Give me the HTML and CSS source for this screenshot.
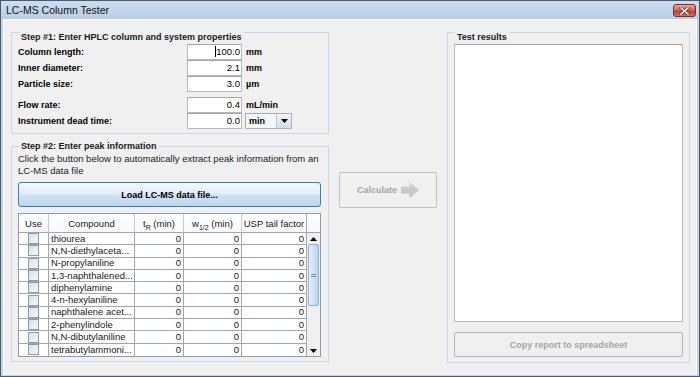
FILE: index.html
```html
<!DOCTYPE html>
<html lang="en">
<head>
<meta charset="utf-8">
<title>LC-MS Column Tester</title>
<link rel="stylesheet" href="styles.css">
</head>
<body>
<div class="window">
  <div class="titlebar">
    <span class="title">LC-MS Column Tester</span>
    <div class="close-btn">
      <svg width="11" height="8" viewBox="0 0 11 8">
        <path d="M2 1 L9 7 M9 1 L2 7" stroke="#6b2a22" stroke-width="3" stroke-linecap="square"/>
        <path d="M2 1 L9 7 M9 1 L2 7" stroke="#ffffff" stroke-width="1.6" stroke-linecap="square"/>
      </svg>
    </div>
  </div>
  <div class="content">
    <div class="left-col">
      <section class="group step1">
        <div class="group-title">Step #1: Enter HPLC column and system properties</div>
        <div class="form">
          <span class="label">Column length:</span><div class="field"><span class="caret"></span>100.0</div><span class="unit">mm</span>
          <span class="label">Inner diameter:</span><div class="field">2.1</div><span class="unit">mm</span>
          <span class="label">Particle size:</span><div class="field">3.0</div><span class="unit">µm</span>
        </div>
        <div class="form form-second">
          <span class="label">Flow rate:</span><div class="field">0.4</div><span class="unit">mL/min</span>
          <span class="label">Instrument dead time:</span><div class="field">0.0</div>
          <div class="combo"><span class="combo-text">min</span><span class="combo-arrow"><svg width="7" height="4" viewBox="0 0 7 4"><path d="M0 0 H7 L3.5 4 Z" fill="#000"/></svg></span></div>
        </div>
      </section>
      <section class="group step2">
        <div class="group-title">Step #2: Enter peak information</div>
        <p class="hint">Click the button below to automatically extract peak information from an<br>LC-MS data file</p>
        <button class="btn btn-load">Load LC-MS data file...</button>
        <div class="table-box">
          <table class="peaks">
            <colgroup>
              <col class="c-use"><col class="c-name"><col class="c-tr"><col class="c-w"><col class="c-usp">
            </colgroup>
            <thead>
              <tr><th>Use</th><th>Compound</th><th>t<sub>R</sub> (min)</th><th>w<sub>1/2</sub> (min)</th><th>USP tail factor</th></tr>
            </thead>
            <tbody>
              <tr><td><span class="check"></span></td><td class="name">thiourea</td><td>0</td><td>0</td><td>0</td></tr>
              <tr><td><span class="check"></span></td><td class="name">N,N-diethylaceta...</td><td>0</td><td>0</td><td>0</td></tr>
              <tr><td><span class="check"></span></td><td class="name">N-propylaniline</td><td>0</td><td>0</td><td>0</td></tr>
              <tr><td><span class="check"></span></td><td class="name">1,3-naphthalened...</td><td>0</td><td>0</td><td>0</td></tr>
              <tr><td><span class="check"></span></td><td class="name">diphenylamine</td><td>0</td><td>0</td><td>0</td></tr>
              <tr><td><span class="check"></span></td><td class="name">4-n-hexylaniline</td><td>0</td><td>0</td><td>0</td></tr>
              <tr><td><span class="check"></span></td><td class="name">naphthalene acet...</td><td>0</td><td>0</td><td>0</td></tr>
              <tr><td><span class="check"></span></td><td class="name">2-phenylindole</td><td>0</td><td>0</td><td>0</td></tr>
              <tr><td><span class="check"></span></td><td class="name">N,N-dibutylaniline</td><td>0</td><td>0</td><td>0</td></tr>
              <tr><td><span class="check"></span></td><td class="name">tetrabutylammoni...</td><td>0</td><td>0</td><td>0</td></tr>
            </tbody>
          </table>
          <div class="vscroll">
            <div class="corner"></div>
            <div class="track">
              <div class="sb-btn"><svg width="7" height="4" viewBox="0 0 7 4"><path d="M0 4 H7 L3.5 0 Z" fill="#000"/></svg></div>
              <div class="thumb"><span class="grip"></span></div>
              <div class="track-fill"></div>
              <div class="sb-btn"><svg width="7" height="4" viewBox="0 0 7 4"><path d="M0 0 H7 L3.5 4 Z" fill="#000"/></svg></div>
            </div>
          </div>
        </div>
      </section>
    </div>
    <div class="mid-col">
      <button class="btn btn-calc" disabled>Calculate
        <svg class="arrow" width="18" height="16" viewBox="0 0 18 16">
          <defs><linearGradient id="ag" x1="0" y1="0" x2="0" y2="1"><stop offset="0" stop-color="#d6d6d6"/><stop offset="1" stop-color="#bdbdbd"/></linearGradient></defs>
          <path d="M0 4.5 H8.5 V0 L18 8 L8.5 16 V11.5 H0 Z" fill="url(#ag)"/>
        </svg>
      </button>
    </div>
    <section class="group results">
      <div class="group-title">Test results</div>
      <div class="textarea"></div>
      <button class="btn btn-copy" disabled>Copy report to spreadsheet</button>
    </section>
  </div>
</div>
</body>
</html>
```

FILE: styles.css
```css
* { box-sizing: border-box; }
html, body { margin: 0; padding: 0; }
body {
  width: 700px;
  height: 377px;
  overflow: hidden;
  font-family: "Liberation Sans", Arial, sans-serif;
  font-size: 9.5px;
  color: #000;
}
.window {
  width: 700px;
  height: 377px;
  border: 1px solid #4d5b69;
  background: #c3d4e7;
  display: flex;
  flex-direction: column;
}
.titlebar {
  height: 18px;
  flex: none;
  display: flex;
  align-items: flex-start;
  justify-content: space-between;
  background: linear-gradient(to bottom, #cddef0, #b9cee6);
}
.title {
  font-size: 10.5px;
  line-height: 18px;
  padding-left: 5px;
  color: #111;
}
.close-btn {
  width: 23px;
  height: 13px;
  margin: 3px 3px 0 0;
  border: 1px solid #7a2f26;
  border-radius: 3px;
  background: linear-gradient(to bottom, #e8a89e 0%, #d4695b 45%, #c0402f 55%, #d2705f 100%);
  display: flex;
  align-items: center;
  justify-content: center;
}
.close-btn svg { display: block; }
.content {
  flex: 1;
  margin: 0 2px 1px 2px;
  background: #f0f0f0;
  border: 1px solid #f9fbfd;
  display: flex;
  align-items: flex-start;
  padding: 12px 6px 0 7px;
}
.left-col {
  width: 318px;
  display: flex;
  flex-direction: column;
  gap: 12px;
}
.group {
  border: 1px solid #c9d7e5;
  display: flex;
  flex-direction: column;
}
.group-title {
  align-self: flex-start;
  margin: -7px 0 0 1px;
  padding: 0 2px;
  background: #f0f0f0;
  font-weight: bold;
  font-size: 9px;
  line-height: 13px;
  height: 13px;
  color: #1a1a1a;
}
.step1 {
  height: 102px;
  padding: 5px 6px 0 6px;
}
.form {
  display: grid;
  grid-template-columns: 169px 55px 1fr;
  grid-auto-rows: 16px;
  align-items: center;
}
.form-second { margin-top: 5px; }
.label { font-weight: bold; font-size: 9px; }
.unit { font-weight: bold; font-size: 9px; padding-left: 4px; }
.field {
  height: 16px;
  background: #fff;
  border: 1px solid #b5b8bd;
  border-top-color: #a3a6ab;
  text-align: right;
  padding-right: 1px;
  line-height: 14px;
}
.caret {
  display: inline-block;
  width: 1px;
  height: 11px;
  background: #000;
  vertical-align: -2px;
}
.combo {
  margin-left: 3px;
  width: 47px;
  height: 16px;
  border: 1px solid #a9acb1;
  background: #f4f7fa;
  display: flex;
  align-items: stretch;
}
.combo-text {
  flex: 1;
  font-weight: bold;
  font-size: 9px;
  line-height: 14px;
  padding-left: 3px;
}
.combo-arrow {
  width: 15px;
  border-left: 1px solid #b9c3cf;
  background: linear-gradient(to bottom, #f1f5f9, #d4dde8);
  display: flex;
  align-items: center;
  justify-content: center;
}
.combo-arrow svg { display: block; }
.step2 {
  height: 216px;
  padding: 0 6px 4px 6px;
}
.hint {
  margin: 0;
  line-height: 12px;
  height: 24px;
  color: #1a1a1a;
}
.btn {
  font-family: "Liberation Sans", Arial, sans-serif;
  font-size: 9px;
  font-weight: bold;
  margin: 0;
  padding: 0;
}
.btn-load {
  margin-top: 5px;
  width: 303px;
  height: 25px;
  border: 1px solid #3c7fb1;
  border-radius: 3px;
  background: linear-gradient(to bottom, #f3f8fc 0%, #e3eef8 45%, #cfe2f3 55%, #bcd6ee 100%);
  color: #000;
}
.table-box {
  margin-top: 6px;
  width: 303px;
  height: 144px;
  border: 1px solid #8d9bab;
  display: flex;
  background: #fff;
}
.peaks {
  width: 288px;
  table-layout: fixed;
  border-collapse: separate;
  border-spacing: 0;
  font-size: 9.5px;
}
.c-use { width: 30px; }
.c-name { width: 86px; }
.c-tr { width: 49px; }
.c-w { width: 58px; }
.c-usp { width: 65px; }
.peaks th {
  height: 19px;
  font-weight: normal;
  text-align: center;
  border-right: 1px solid #c8ccd2;
  border-bottom: 1px solid #9ea6b0;
  background: linear-gradient(to bottom, #ffffff, #f7f8fa);
  padding: 0;
  white-space: nowrap;
  overflow: hidden;
  color: #1a1a1a;
}
.peaks th:last-child { border-right-color: #9ea6b0; }
.peaks sub {
  font-size: 7px;
  vertical-align: -3px;
  line-height: 0;
}
.peaks td {
  height: 12.3px;
  padding: 0 2px 0 2px;
  border-right: 1px solid #9ea6b0;
  border-bottom: 1px solid #9ea6b0;
  text-align: right;
  line-height: 10px;
  white-space: nowrap;
  overflow: hidden;
  color: #1a1a1a;
}
.peaks tbody tr:last-child td { border-bottom: 0; }
.peaks td:first-child { text-align: center; padding: 0; }
.peaks td.name { text-align: left; }
.check {
  display: inline-block;
  width: 11px;
  height: 11px;
  border: 1px solid #8f9aa6;
  background: linear-gradient(135deg, #d9e0e8, #f6f8fa);
  vertical-align: middle;
}
.vscroll {
  width: 13px;
  display: flex;
  flex-direction: column;
}
.corner {
  height: 19px;
  flex: none;
  border-bottom: 1px solid #9ea6b0;
  background: linear-gradient(to bottom, #ffffff, #f7f8fa);
}
.track {
  flex: 1;
  display: flex;
  flex-direction: column;
  background: #eef0f2;
}
.sb-btn {
  height: 11px;
  flex: none;
  display: flex;
  align-items: center;
  justify-content: center;
}
.sb-btn svg { display: block; }
.thumb {
  height: 62px;
  flex: none;
  margin: 0 1px;
  border: 1px solid #8fb0d6;
  border-radius: 2px;
  background: linear-gradient(to right, #e8f1fb, #cfe0f3 50%, #bcd3ee);
  display: flex;
  align-items: center;
  justify-content: center;
}
.grip {
  width: 5px;
  height: 3px;
  border-top: 1px solid #6f8fb8;
  border-bottom: 1px solid #6f8fb8;
}
.track-fill { flex: 1; }
.mid-col {
  width: 118px;
  padding: 140px 10px 0 10px;
}
.btn-calc {
  width: 98px;
  height: 36px;
  border: 1px solid #c3c3c3;
  border-radius: 2px;
  background: #f0f0f0;
  color: #a5a5a5;
  display: flex;
  align-items: center;
  justify-content: center;
  gap: 4px;
}
.btn-calc .arrow { display: block; }
.results {
  width: 243px;
  height: 331px;
  padding: 5px 6px 0 6px;
}
.textarea {
  width: 229px;
  height: 278px;
  background: #fff;
  border: 1px solid #b8bbc0;
  border-top-color: #a0a3a8;
}
.btn-copy {
  margin-top: 10px;
  width: 229px;
  height: 25px;
  border: 1px solid #b5b5b5;
  border-radius: 2px;
  background: #f0f0f0;
  color: #a5a5a5;
}
```
